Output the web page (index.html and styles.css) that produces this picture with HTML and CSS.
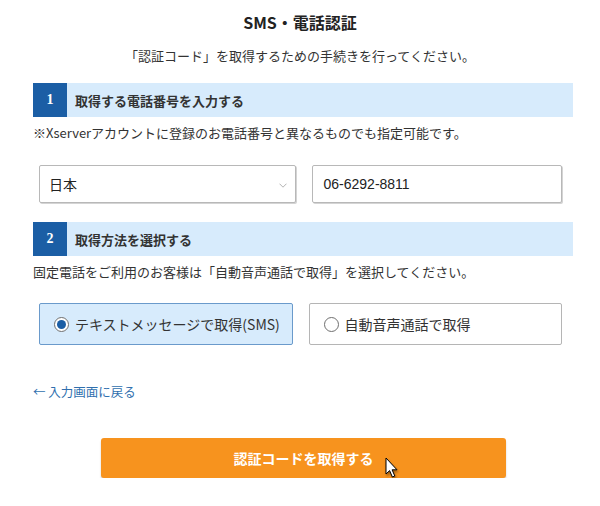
FILE: index.html
```html
<!DOCTYPE html>
<html lang="ja">
<head>
<meta charset="utf-8">
<title>SMS・電話認証</title>
<link rel="stylesheet" href="styles.css">
</head>
<body>
<h1 class="title">SMS・電話認証</h1>
<p class="lead">「認証コード」を取得するための手続きを行ってください。</p>
<div class="page">
  <div class="step-head step-first">
    <span class="step-num">1</span>
    <span class="step-label">取得する電話番号を入力する</span>
  </div>
  <p class="note">※Xserverアカウントに登録のお電話番号と異なるものでも指定可能です。</p>

  <div class="fields">
    <div class="field select">
      <span class="field-text">日本</span>
      <svg class="chev" width="8" height="5" viewBox="0 0 8 5"><path d="M0.5 0.7 L4 4.2 L7.5 0.7" fill="none" stroke="#b3b3b3" stroke-width="1"/></svg>
    </div>
    <div class="field input">
      <span class="field-text num">06-6292-8811</span>
    </div>
  </div>

  <div class="step-head step-second">
    <span class="step-num">2</span>
    <span class="step-label">取得方法を選択する</span>
  </div>
  <p class="note">固定電話をご利用のお客様は「自動音声通話で取得」を選択してください。</p>

  <div class="options">
    <div class="option selected">
      <span class="radio checked"><span class="dot"></span></span>
      <span class="option-label">テキストメッセージで取得(SMS)</span>
    </div>
    <div class="option">
      <span class="radio"></span>
      <span class="option-label">自動音声通話で取得</span>
    </div>
  </div>

  <a class="back" href="#">← 入力画面に戻る</a>

  <div class="btn-wrap">
    <button class="submit" type="button">認証コードを取得する</button>
    <svg class="cursor" width="14" height="22" viewBox="0 0 14 22"><path d="M1 1 L1 17 L4.6 13.6 L7.4 20 L9.8 19 L7.1 12.8 L12 12.8 Z" fill="#fff" stroke="#000" stroke-width="1" stroke-linejoin="round"/></svg>
  </div>
</div>
</body>
</html>
```

FILE: styles.css
```css
* { box-sizing: border-box; }
body {
  margin: 0;
  background: #fff;
  color: #333;
  font-family: "Noto Sans CJK JP", "Noto Sans", sans-serif;
}
.title {
  margin: 0;
  padding-top: 10px;
  font-size: 16px;
  line-height: 24px;
  font-weight: bold;
  text-align: center;
  color: #222;
}
.lead {
  margin: 12px 0 0;
  font-size: 13px;
  line-height: 20px;
  text-align: center;
}
.page {
  width: 540px;
  margin-left: 33px;
}
.step-head {
  display: flex;
  align-items: center;
  height: 34px;
  background: #d7ebfc;
}
.step-first { margin-top: 17px; }
.step-second { margin-top: 19px; }
.step-num {
  width: 34px;
  height: 34px;
  display: flex;
  align-items: center;
  justify-content: center;
  background: #1b5ea5;
  color: #fff;
  font-family: "Liberation Serif", serif;
  font-weight: bold;
  font-size: 14px;
}
.step-label {
  padding-left: 8px;
  font-size: 13px;
  font-weight: bold;
  color: #333;
}
.note {
  margin: 6px 0 0;
  font-size: 13px;
  line-height: 20px;
}
.fields {
  display: flex;
  gap: 16px;
  margin-top: 22px;
  padding: 0 11px 0 6px;
}
.field {
  flex: 1;
  height: 38px;
  display: flex;
  align-items: center;
  border: 1px solid #b8b8b8;
  border-radius: 2px;
  box-shadow: 1px 1px 0 #d4d4d4;
  background: #fff;
}
.select { padding: 0 8px 0 9px; justify-content: space-between; }
.input { padding-left: 11px; }
.field-text {
  font-size: 14px;
  color: #222;
}
.num { font-family: "Liberation Sans", Arial, sans-serif; }
.chev { margin-top: 2px; }
.options {
  display: flex;
  gap: 16px;
  margin-top: 21px;
  padding: 0 11px 0 6px;
}
.option {
  flex: 1;
  height: 42px;
  display: flex;
  align-items: center;
  padding-left: 14px;
  border: 1px solid #b5b5b5;
  border-radius: 2px;
  background: #fff;
}
.option.selected {
  background: #d7ebfc;
  border-color: #6a9acb;
}
.radio {
  width: 15px;
  height: 15px;
  border: 1px solid #6f6f6f;
  border-radius: 50%;
  background: #fff;
  display: flex;
  align-items: center;
  justify-content: center;
  margin-right: 6px;
}
.dot {
  width: 9px;
  height: 9px;
  border-radius: 50%;
  background: #1b5ea5;
}
.option-label {
  font-size: 14px;
  color: #333;
}
.back {
  display: block;
  margin-top: 37px;
  font-size: 12.5px;
  line-height: 20px;
  color: #2f6fae;
  text-decoration: none;
}
.btn-wrap {
  position: relative;
  margin-top: 36px;
  padding-left: 68px;
}
.submit {
  display: block;
  width: 405px;
  height: 40px;
  border: none;
  border-radius: 3px;
  background: #f7931e;
  color: #fff;
  font-family: "Noto Sans CJK JP", sans-serif;
  font-size: 14px;
  font-weight: bold;
  box-shadow: 0 2px 2px rgba(0,0,0,0.2);
  padding: 0;
}
.cursor {
  position: absolute;
  left: 352px;
  top: 19px;
  filter: drop-shadow(1px 2px 1px rgba(0,0,0,0.35));
}
```
